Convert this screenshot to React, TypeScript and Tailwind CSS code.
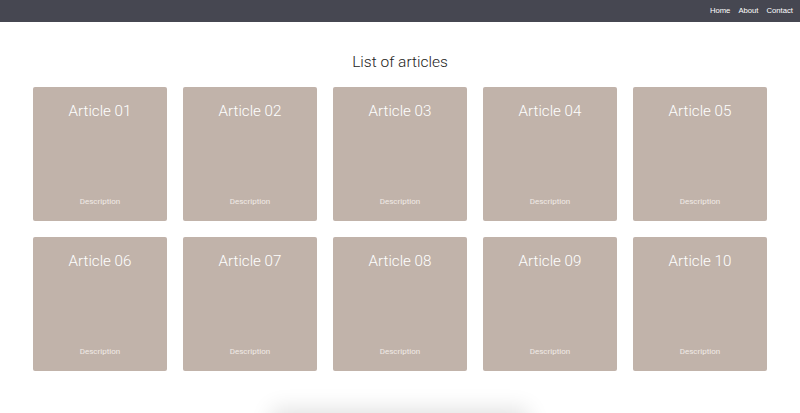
import React from "react";

const articles = ["01", "02", "03", "04", "05", "06", "07", "08", "09", "10"];

export default function App() {
  return (
    <div className="min-h-[413px] bg-white font-['Roboto',sans-serif] relative overflow-hidden">
      <header className="h-[22px] bg-[#464751] flex items-center justify-end pr-[7px] gap-[8px] font-['Liberation_Sans',Arial,sans-serif] text-[7.7px] text-white">
        <a>Home</a>
        <a>About</a>
        <a>Contact</a>
      </header>
      <h1 className="text-center font-light text-[15.5px] leading-[19px] text-[#222] mt-[31px]">List of articles</h1>
      <div className="grid grid-cols-5 gap-4 px-[33px] mt-[15px]">
        {articles.map((n) => (
          <div key={n} className="h-[134px] bg-[#c1b3aa] rounded-[2px] flex flex-col items-center justify-between pt-[15px] pb-[14px] text-white">
            <div className="font-light text-[15.2px] leading-[19px]">Article {n}</div>
            <div className="font-normal text-[8px] leading-[10px] text-[#f1ebe7]">Description</div>
          </div>
        ))}
      </div>
      <div className="absolute left-[278px] w-[244px] top-[415px] h-[40px] bg-white shadow-[0_0_22px_6px_rgba(0,0,0,0.12)]" />
    </div>
  );
}
